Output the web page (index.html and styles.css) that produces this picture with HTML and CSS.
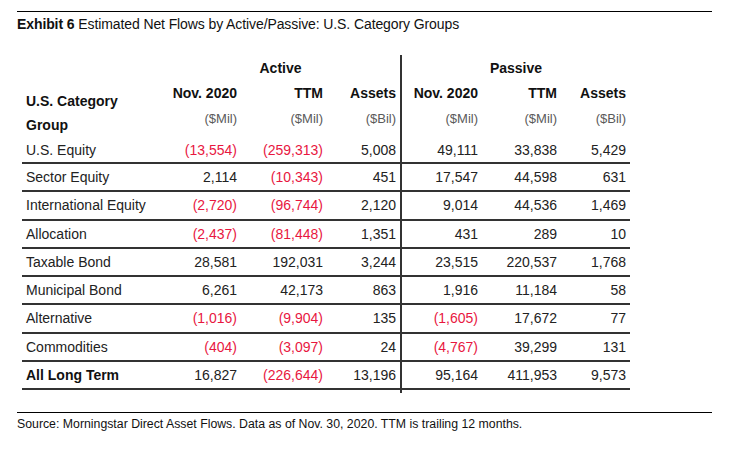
FILE: index.html
```html
<!DOCTYPE html>
<html lang="en">
<head>
<meta charset="utf-8">
<title>Exhibit 6</title>
<link rel="stylesheet" href="styles.css">
</head>
<body>
<div class="page">
  <div class="title"><b>Exhibit 6</b> Estimated Net Flows by Active/Passive: U.S. Category Groups</div>

  <div class="table">
    <div class="row group-row">
      <div class="cell"></div>
      <div class="cell span3 center">Active</div>
      <div class="cell span3 center div">Passive</div>
    </div>

    <div class="head-block">
      <div class="cat-head">U.S. Category<br>Group</div>
      <div class="head-rows">
        <div class="row col-row">
          <div class="cell">Nov. 2020</div>
          <div class="cell">TTM</div>
          <div class="cell">Assets</div>
          <div class="cell div">Nov. 2020</div>
          <div class="cell">TTM</div>
          <div class="cell">Assets</div>
        </div>
        <div class="row unit-row">
          <div class="cell">($Mil)</div>
          <div class="cell">($Mil)</div>
          <div class="cell">($Bil)</div>
          <div class="cell div">($Mil)</div>
          <div class="cell">($Mil)</div>
          <div class="cell">($Bil)</div>
        </div>
      </div>
    </div>

    <div class="row data first">
      <div class="cell name">U.S. Equity</div>
      <div class="cell neg">(13,554)</div><div class="cell neg">(259,313)</div><div class="cell">5,008</div>
      <div class="cell div">49,111</div><div class="cell">33,838</div><div class="cell">5,429</div>
    </div>
    <div class="row data">
      <div class="cell name">Sector Equity</div>
      <div class="cell">2,114</div><div class="cell neg">(10,343)</div><div class="cell">451</div>
      <div class="cell div">17,547</div><div class="cell">44,598</div><div class="cell">631</div>
    </div>
    <div class="row data">
      <div class="cell name">International Equity</div>
      <div class="cell neg">(2,720)</div><div class="cell neg">(96,744)</div><div class="cell">2,120</div>
      <div class="cell div">9,014</div><div class="cell">44,536</div><div class="cell">1,469</div>
    </div>
    <div class="row data">
      <div class="cell name">Allocation</div>
      <div class="cell neg">(2,437)</div><div class="cell neg">(81,448)</div><div class="cell">1,351</div>
      <div class="cell div">431</div><div class="cell">289</div><div class="cell">10</div>
    </div>
    <div class="row data">
      <div class="cell name">Taxable Bond</div>
      <div class="cell">28,581</div><div class="cell">192,031</div><div class="cell">3,244</div>
      <div class="cell div">23,515</div><div class="cell">220,537</div><div class="cell">1,768</div>
    </div>
    <div class="row data">
      <div class="cell name">Municipal Bond</div>
      <div class="cell">6,261</div><div class="cell">42,173</div><div class="cell">863</div>
      <div class="cell div">1,916</div><div class="cell">11,184</div><div class="cell">58</div>
    </div>
    <div class="row data">
      <div class="cell name">Alternative</div>
      <div class="cell neg">(1,016)</div><div class="cell neg">(9,904)</div><div class="cell">135</div>
      <div class="cell div neg">(1,605)</div><div class="cell">17,672</div><div class="cell">77</div>
    </div>
    <div class="row data">
      <div class="cell name">Commodities</div>
      <div class="cell neg">(404)</div><div class="cell neg">(3,097)</div><div class="cell">24</div>
      <div class="cell div neg">(4,767)</div><div class="cell">39,299</div><div class="cell">131</div>
    </div>
    <div class="row data">
      <div class="cell name total">All Long Term</div>
      <div class="cell">16,827</div><div class="cell neg">(226,644)</div><div class="cell">13,196</div>
      <div class="cell div">95,164</div><div class="cell">411,953</div><div class="cell">9,573</div>
    </div>
    <div class="row tail">
      <div class="cell"></div><div class="cell"></div><div class="cell"></div><div class="cell"></div>
      <div class="cell div"></div><div class="cell"></div><div class="cell"></div>
    </div>
  </div>

  <div class="source">Source: Morningstar Direct Asset Flows. Data as of Nov. 30, 2020. TTM is trailing 12 months.</div>
</div>
</body>
</html>
```

FILE: styles.css
```css
html, body {
  margin: 0;
  padding: 0;
  background: #fff;
}

body {
  font-family: "Liberation Sans", Arial, sans-serif;
  color: #222;
  font-size: 14px;
}

.page {
  margin: 11px 0 0 17px;
  width: 695px;
  border-top: 1px solid #000;
}

.title {
  color: #111;
  font-size: 14px;
  line-height: 18px;
  padding-top: 3px;
  letter-spacing: -0.1px;
}

.title b {
  font-weight: bold;
}

.table {
  margin: 22px 0 0 5px;
  width: 608px;
}

.row {
  display: grid;
  grid-template-columns: 139px 80px 86px 73px 82px 79px 69px;
  align-items: stretch;
}

.cell {
  padding: 0 4px 0 0;
  text-align: right;
  white-space: nowrap;
  display: flex;
  align-items: center;
  justify-content: flex-end;
}

.cell.div {
  border-left: 2px solid #333;
}

.group-row {
  height: 25px;
  font-weight: bold;
  color: #111;
}

.group-row .span3 {
  grid-column: span 3;
  justify-content: center;
  padding: 0;
}

.head-block {
  display: grid;
  grid-template-columns: 139px 469px;
}

.cat-head {
  font-weight: bold;
  color: #111;
  line-height: 24px;
  padding-left: 4px;
  align-self: end;
}

.head-rows .row {
  grid-template-columns: 80px 86px 73px 82px 79px 69px;
}

.col-row {
  height: 26px;
  font-weight: bold;
  color: #111;
}

.unit-row {
  height: 31px;
  font-size: 13px;
  color: #5a5a5a;
}

.unit-row .cell {
  align-items: flex-start;
  padding-top: 5px;
  line-height: 16px;
}

.data {
  height: 28.25px;
  border-bottom: 2px solid #333;
  box-sizing: border-box;
}

.data.first {
  height: 27px;
}

.data .cell.name {
  justify-content: flex-start;
  padding-left: 4px;
  text-align: left;
}

.name.total {
  font-weight: bold;
  color: #111;
}

.neg {
  color: #e8173f;
}

.tail {
  height: 3px;
}

.source {
  margin-top: 19px;
  border-top: 1px solid #000;
  padding-top: 3px;
  font-size: 12.3px;
  line-height: 16px;
  color: #111;
}
```
